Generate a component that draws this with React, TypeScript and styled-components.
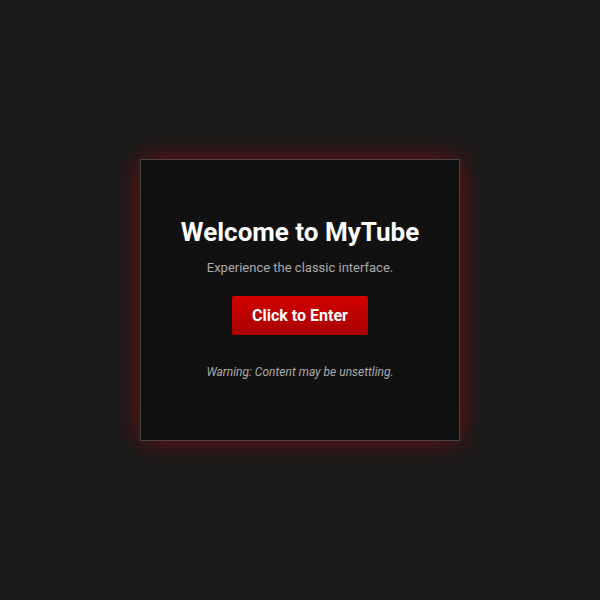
import styled, { createGlobalStyle } from "styled-components";

const GlobalStyle = createGlobalStyle`
  html, body {
    margin: 0;
    padding: 0;
    background: #1a1a1a;
    font-family: Roboto, "Liberation Sans", sans-serif;
  }
`;

export default function App() {
  return (
    <>
      <GlobalStyle />
      <Page>
        <Card>
          <Title>Welcome to MyTube</Title>
          <Subtitle>Experience the classic interface.</Subtitle>
          <EnterButton>Click to Enter</EnterButton>
          <Warning>Warning: Content may be unsettling.</Warning>
        </Card>
      </Page>
    </>
  );
}

const Page = styled.div`
  min-height: 100vh;
  display: flex;
  align-items: center;
  justify-content: center;
`;

const Card = styled.div`
  box-sizing: border-box;
  width: 320px;
  padding: 56px 30px 59px;
  background: #111;
  border: 1px solid #444;
  box-shadow: 0 0 25px rgba(220, 0, 0, 0.45);
  display: flex;
  flex-direction: column;
  align-items: center;
  text-align: center;
`;

const Title = styled.h1`
  margin: 0;
  font-size: 26px;
  line-height: 32px;
  font-weight: 700;
  color: #fff;
`;

const Subtitle = styled.p`
  margin: 11px 0 0;
  font-size: 13px;
  line-height: 18px;
  color: #aaa;
`;

const EnterButton = styled.button`
  margin-top: 19px;
  height: 39px;
  padding: 0 20px;
  border: none;
  border-radius: 2px;
  background: linear-gradient(#d10000, #a80000);
  color: #fff;
  font-family: inherit;
  font-size: 16px;
  font-weight: 700;
  cursor: pointer;
`;

const Warning = styled.p`
  margin: 28px 0 0;
  font-size: 12px;
  line-height: 18px;
  font-style: italic;
  color: #aaa;
`;
